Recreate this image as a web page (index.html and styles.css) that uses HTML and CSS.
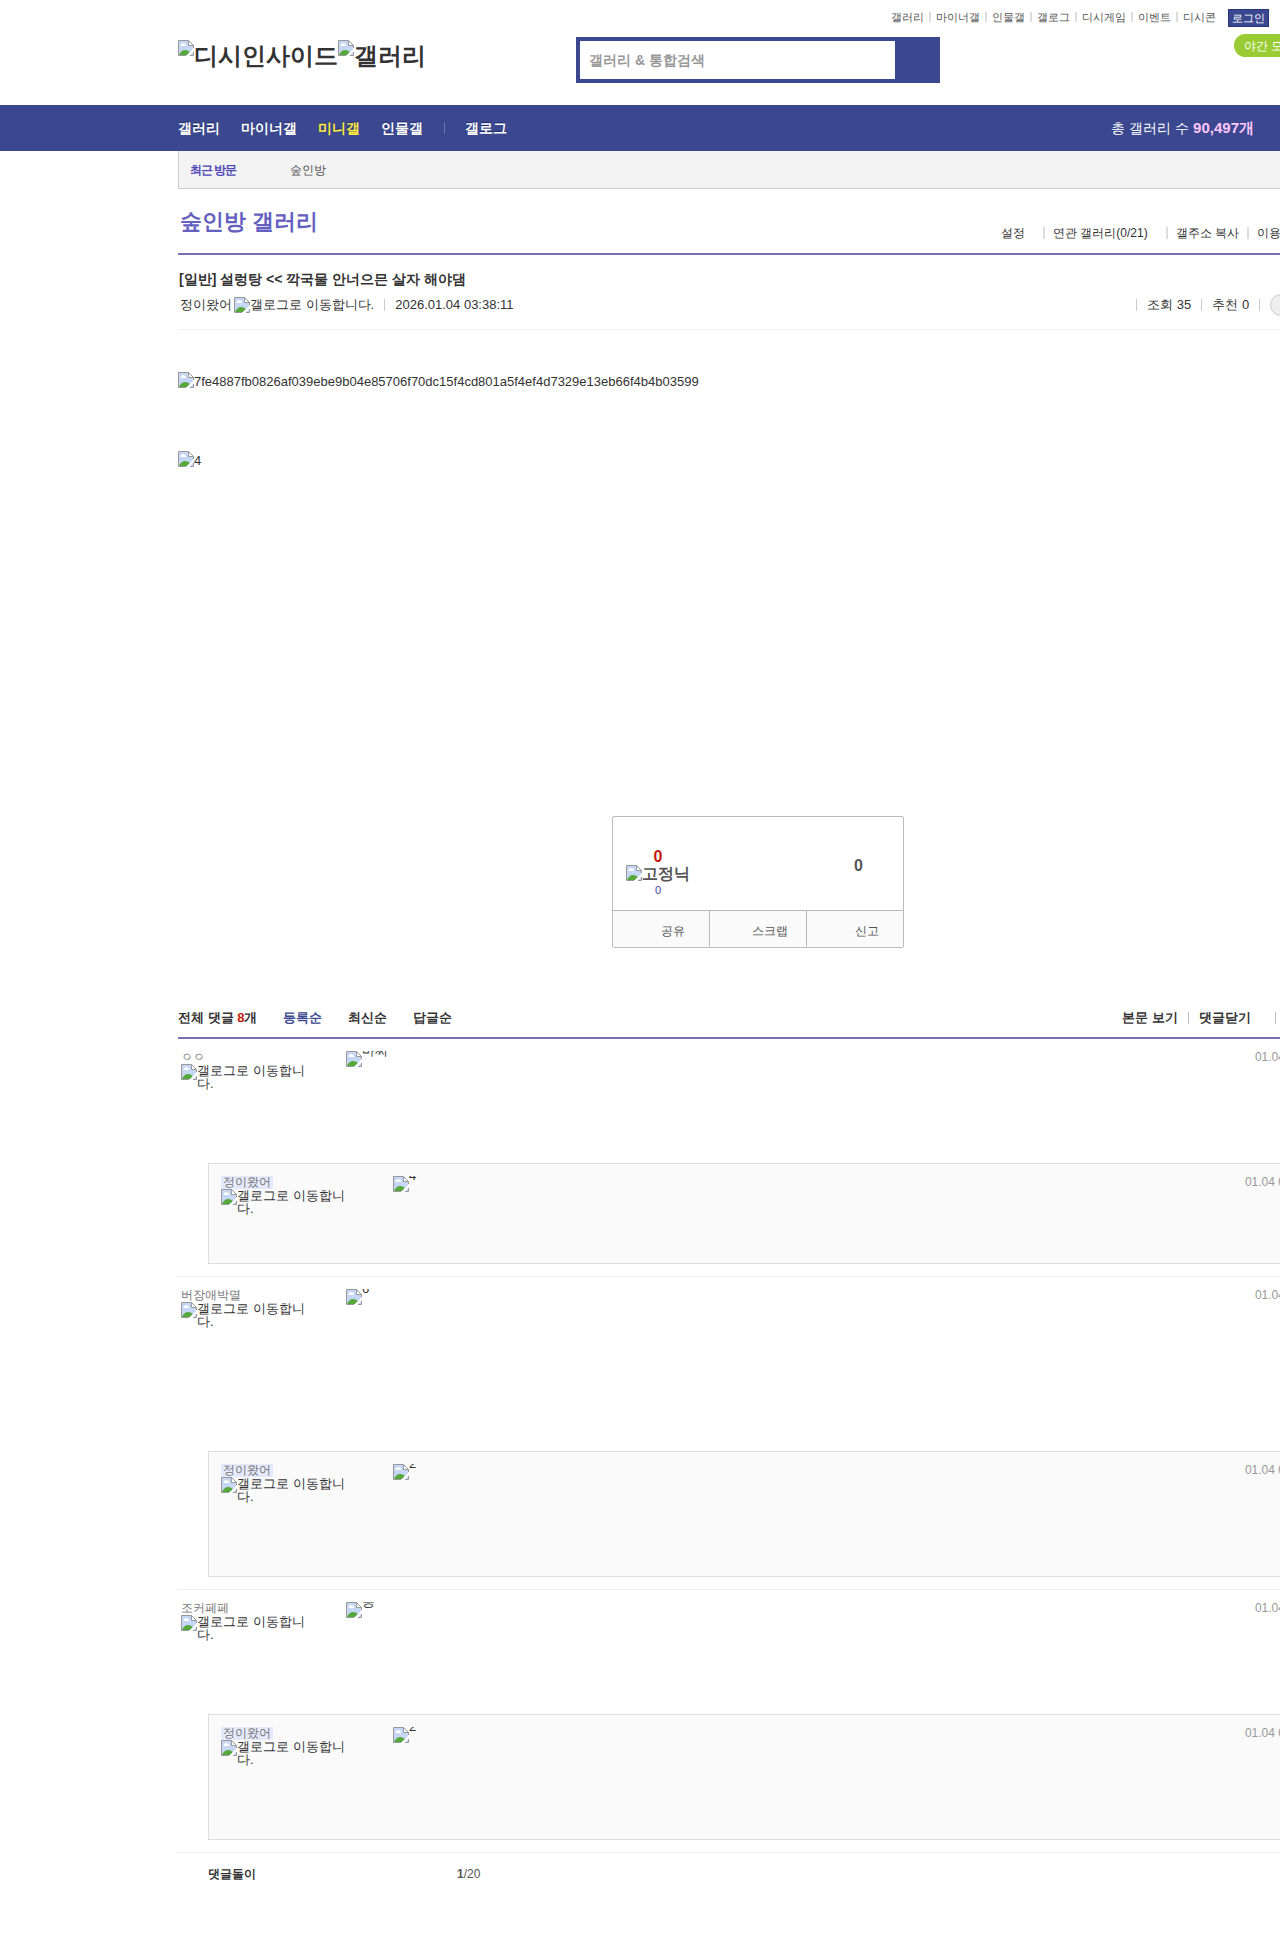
FILE: index.html
```html
<!DOCTYPE html>
<html lang="ko">
<head>
    <meta charset="UTF-8">
    <meta name="viewport" content="width=device-width, initial-scale=1.0">
    <title>숲인방 갤러리</title>
    <link rel="stylesheet" href="styles.css">
</head>
<body>
    <svg class="defs" width="0" height="0" aria-hidden="true">
        <symbol id="noimg" viewBox="0 0 16 16">
            <path d="M.5.5h10l5 5v10H.5z" fill="#c6d7f6"/>
            <path d="M2.500 6a1.500 1.500 0 0 1 1-2 2 2 0 0 1 3.500 0A1.500 1.500 0 0 1 8 6z" fill="#fff"/>
            <path d="M1 15c1-3 3.500-5 6-5s4 1.500 5 2l-3 3z" fill="#56a83c"/>
            <path d="M16 8v3l-4.500 5H8z" fill="#fff"/>
            <path d="M10.500.5v5h5" fill="#fff"/>
            <path d="M8 15.500H.5V.5h10l5 5V8M10.500.5v5h5M15.500 12v3.500H12" fill="none" stroke="#999"/>
        </symbol>
    </svg>

    <header class="wrap header">
        <ul class="top-links">
            <li><a href="#">갤러리</a></li>
            <li><a href="#">마이너갤</a></li>
            <li><a href="#">인물갤</a></li>
            <li><a href="#">갤로그</a></li>
            <li><a href="#">디시게임</a></li>
            <li><a href="#">이벤트</a></li>
            <li><a href="#">디시콘</a></li>
        </ul>
        <a href="#" class="login">로그인</a>
        <button class="night">야간 모드</button>
        <h1 class="logo">
            <a href="#"><svg class="noimg"><use href="#noimg"/></svg>디시인사이드</a><a href="#"><svg class="noimg"><use href="#noimg"/></svg>갤러리</a>
        </h1>
        <form class="search">
            <input type="text" placeholder="갤러리 &amp; 통합검색" aria-label="갤러리 &amp; 통합검색">
            <button type="button" aria-label="검색"></button>
        </form>
    </header>

    <nav class="gnb">
        <div class="wrap gnb-inner">
            <a href="#">갤러리</a>
            <a href="#">마이너갤</a>
            <a href="#" class="on">미니갤</a>
            <a href="#">인물갤</a>
            <a href="#" class="gallog">갤로그</a>
            <p class="total">총 갤러리 수 <strong>90,497개</strong></p>
        </div>
    </nav>

    <main class="wrap">
        <div class="history">
            <h2>최근 방문</h2>
            <a href="#">숲인방</a>
        </div>

        <div class="gall-head">
            <h2><a href="#">숲인방 갤러리</a></h2>
            <div class="gall-menu">
                <button class="wide">설정</button>
                <button class="wide">연관 갤러리(0/21)</button>
                <button>갤주소 복사</button>
                <button>이용안내</button>
            </div>
        </div>

        <article>
            <div class="post-head">
                <h3>[일반] 설렁탕 &lt;&lt; 깍국물 안너으믄 살자 해야댐</h3>
                <div class="post-info">
                    <span class="writer">정이왔어</span>
                    <span class="alt"><svg class="noimg"><use href="#noimg"/></svg>갤로그로 이동합니다.</span>
                    <span class="date">2026.01.04 03:38:11</span>
                    <span class="count">조회 35</span>
                    <span class="count">추천 0</span>
                    <span class="count"></span>
                    <a href="#comments" class="pill">댓글 8</a>
                </div>
            </div>
            <div class="post-body">
                <p class="alt"><svg class="noimg"><use href="#noimg"/></svg>7fe4887fb0826af039ebe9b04e85706f70dc15f4cd801a5f4ef4d7329e13eb66f4b4b03599</p>
                <p class="alt"><svg class="noimg"><use href="#noimg"/></svg>4</p>
            </div>
            <div class="vote-box">
                <div class="votes">
                    <div class="up">
                        <strong>0</strong>
                        <span class="alt fixed"><svg class="noimg"><use href="#noimg"/></svg>고정닉</span>
                        <span class="fixed-num">0</span>
                    </div>
                    <strong class="down">0</strong>
                </div>
                <div class="vote-buttons">
                    <button>공유</button>
                    <button>스크랩</button>
                    <button>신고</button>
                </div>
            </div>
        </article>

        <section id="comments">
            <div class="cmt-head">
                <span>전체 댓글 <em>8</em>개</span>
                <button class="on">등록순</button>
                <button>최신순</button>
                <button>답글순</button>
                <div class="cmt-menu">
                    <a href="#">본문 보기</a>
                    <button>댓글닫기</button>
                    <button>새로고침</button>
                </div>
            </div>

            <ul class="cmt-list">
                <li>
                    <div class="cmt">
                        <div class="user">
                            <span class="nick">ㅇㅇ</span>
                            <span class="alt"><svg class="noimg"><use href="#noimg"/></svg>갤로그로 이동합니다.</span>
                        </div>
                        <div class="con"><svg class="noimg"><use href="#noimg"/></svg><span>마찌</span></div>
                        <time>01.04 03:39:02</time>
                    </div>
                    <div class="cmt reply small">
                        <div class="user">
                            <span class="nick me">정이왔어</span>
                            <span class="alt"><svg class="noimg"><use href="#noimg"/></svg>갤로그로 이동합니다.</span>
                        </div>
                        <div class="con"><svg class="noimg"><use href="#noimg"/></svg><span>4</span></div>
                        <time>01.04 03:39:21</time>
                    </div>
                </li>
                <li>
                    <div class="cmt tall">
                        <div class="user">
                            <span class="nick">버장애박멸</span>
                            <span class="alt"><svg class="noimg"><use href="#noimg"/></svg>갤로그로 이동합니다.</span>
                        </div>
                        <div class="con"><svg class="noimg"><use href="#noimg"/></svg><span>6</span></div>
                        <time>01.04 03:40:15</time>
                    </div>
                    <div class="cmt reply">
                        <div class="user">
                            <span class="nick me">정이왔어</span>
                            <span class="alt"><svg class="noimg"><use href="#noimg"/></svg>갤로그로 이동합니다.</span>
                        </div>
                        <div class="con"><svg class="noimg"><use href="#noimg"/></svg><span>2</span></div>
                        <time>01.04 03:40:48</time>
                    </div>
                </li>
                <li>
                    <div class="cmt">
                        <div class="user">
                            <span class="nick">조커페페</span>
                            <span class="alt"><svg class="noimg"><use href="#noimg"/></svg>갤로그로 이동합니다.</span>
                        </div>
                        <div class="con"><svg class="noimg"><use href="#noimg"/></svg><span>콩</span></div>
                        <time>01.04 03:42:30</time>
                    </div>
                    <div class="cmt reply">
                        <div class="user">
                            <span class="nick me">정이왔어</span>
                            <span class="alt"><svg class="noimg"><use href="#noimg"/></svg>갤로그로 이동합니다.</span>
                        </div>
                        <div class="con"><svg class="noimg"><use href="#noimg"/></svg><span>2</span></div>
                        <time>01.04 03:43:05</time>
                    </div>
                </li>
            </ul>

            <div class="cmt-boy">
                <strong>댓글돌이</strong>
                <span><b>1</b>/20</span>
            </div>
        </section>
    </main>
</body>
</html>
```
FILE: styles.css
```css
* {
    box-sizing: border-box;
    margin: 0;
    padding: 0;
}
html {
    overflow-x: hidden;
}
body {
    min-width: 1516px;
    background: #fff;
    color: #333;
    font-family: "Liberation Sans", sans-serif;
    font-size: 13px;
    line-height: 16px;
}
a {
    color: inherit;
    text-decoration: none;
}
ul {
    list-style: none;
}
em {
    font-style: normal;
}
button,
input {
    font: inherit;
    color: inherit;
    border: none;
    background: none;
}
button {
    cursor: pointer;
}
.defs {
    position: absolute;
}
.wrap {
    width: 1160px;
    margin: 0 auto;
}

/* broken image icon with its alt text */
.noimg {
    flex: none;
    width: 16px;
    height: 16px;
}
.alt {
    display: flex;
}

/* header */
.header {
    position: relative;
    height: 105px;
    padding-top: 37px;
    display: flex;
}
.top-links {
    position: absolute;
    top: 9px;
    right: 122px;
    display: flex;
    font-size: 11px;
    color: #555;
}
.top-links li {
    display: flex;
    align-items: center;
}
.top-links li + li::before {
    content: "";
    width: 2px;
    height: 10px;
    margin: 0 5px;
    background: #ddd;
}
.login {
    position: absolute;
    top: 9px;
    left: 1050px;
    width: 41px;
    height: 18px;
    border: 1px solid #29367c;
    background: #3b4890;
    color: #fff;
    font-size: 11px;
    text-align: center;
}
.night {
    position: absolute;
    top: 34px;
    left: 1056px;
    height: 23px;
    padding: 0 10px;
    border-radius: 12px;
    background: #9c3;
    color: #fff;
    font-size: 12px;
}
.logo {
    width: 398px;
    padding-top: 3px;
    display: flex;
    font-size: 24px;
    line-height: 32px;
}
.logo a {
    display: flex;
}
.search {
    display: flex;
    width: 364px;
    height: 46px;
    border: 4px solid #3b4890;
    background: #3b4890;
}
.search input {
    width: 315px;
    padding: 0 9px;
    background: #fff;
    font-size: 14px;
    font-weight: bold;
}
.search input::placeholder {
    color: #999;
}
.search button {
    flex: 1;
}

/* blue menu bar */
.gnb {
    background: #3b4890;
    color: #fff;
}
.gnb-inner {
    height: 46px;
    display: flex;
    align-items: center;
    gap: 21px;
    font-size: 14px;
}
.gnb a {
    font-weight: bold;
    text-shadow: 0 -1px #1f2b6b;
}
.gnb .on {
    color: #ffed44;
}
.gnb .gallog {
    display: flex;
    align-items: center;
}
.gallog::before {
    content: "";
    width: 1px;
    height: 12px;
    margin-right: 20px;
    background: #6c76ae;
}
.total {
    margin-left: auto;
    margin-right: 84px;
}
.total strong {
    color: #ffc6f9;
    font-size: 15px;
}

/* recent galleries */
.history {
    height: 38px;
    padding-left: 11px;
    display: flex;
    align-items: center;
    border: 1px solid #ccc;
    border-top: none;
    background: #f3f3f3;
    color: #555;
    font-size: 12px;
}
.history h2 {
    width: 100px;
    color: #4d47b5;
    font-size: 12px;
    letter-spacing: -1px;
}

.gall-head {
    height: 66px;
    padding-left: 2px;
    display: flex;
    justify-content: space-between;
    border-bottom: 2px solid #7671b4;
}
.gall-head h2 {
    padding-top: 17px;
    color: #6460c0;
    font-size: 22px;
    line-height: 32px;
}
.gall-menu {
    width: 337px;
    padding-top: 36px;
    display: flex;
    align-items: flex-start;
    white-space: nowrap;
    font-size: 12px;
    line-height: 16px;
}
.gall-menu button {
    display: flex;
    align-items: center;
}
.gall-menu button + button::before {
    content: "";
    width: 2px;
    height: 12px;
    margin: 0 8px;
    background: #ddd;
}
.gall-menu .wide {
    padding-right: 10px;
}

/* post */
.post-head {
    height: 75px;
    padding: 15px 1px 0;
    border-bottom: 1px solid #eee;
}
.post-head h3 {
    font-size: 14px;
    line-height: 18px;
}
.post-info {
    padding: 6px 0 0 1px;
    display: flex;
    align-items: center;
}
.writer {
    margin-right: 2px;
}
.date,
.count {
    display: flex;
    align-items: center;
}
.date {
    margin-right: auto;
}
.date::before,
.count::before {
    content: "";
    width: 1px;
    height: 12px;
    margin: 0 10px;
    background: #ccc;
}
.pill {
    height: 22px;
    padding: 2px 14px;
    border: 1px solid #ccc;
    border-radius: 11px;
    background: #eee;
}
.post-body {
    min-height: 486px;
    padding-top: 42px;
}
.post-body .alt {
    margin-bottom: 63px;
    line-height: 20px;
    height: 16px;
}

.vote-box {
    width: 292px;
    margin: 0 auto 59px;
    border: 1px solid #bbb;
    border-radius: 2px;
    color: #555;
}
.votes {
    height: 93px;
    padding: 4px 40px 0 13px;
    display: flex;
    justify-content: space-between;
    align-items: center;
    font-size: 16px;
    font-weight: bold;
}
.up {
    padding-top: 16px;
    display: flex;
    flex-direction: column;
    align-items: center;
    line-height: 17px;
}
.up strong {
    color: #c31a0a;
}
.fixed-num {
    color: #3b4890;
    font-size: 11px;
    font-weight: normal;
}
.vote-buttons {
    display: flex;
    border-top: 1px solid #bbb;
    background: #fafafa;
    font-size: 12px;
}
.vote-buttons button {
    flex: 1;
    height: 36px;
    padding: 3px 0 0 24px;
}
.vote-buttons button + button {
    border-left: 1px solid #bbb;
}

/* comments */
.cmt-head {
    height: 32px;
    padding-top: 3px;
    display: flex;
    align-items: flex-start;
    gap: 26px;
    border-bottom: 2px solid #7671b4;
    font-weight: bold;
}
.cmt-head em {
    color: #c31a0a;
}
.cmt-head .on {
    color: #3b4890;
}
.cmt-menu {
    margin-left: auto;
    display: flex;
    white-space: nowrap;
}
.cmt-menu button {
    display: flex;
    align-items: center;
}
.cmt-menu button::before {
    content: "";
    width: 1px;
    height: 12px;
    margin: 0 10px;
    background: #bbb;
}
.cmt-menu button:last-child {
    margin-left: 14px;
}
.cmt-list li {
    padding-bottom: 12px;
    border-bottom: 1px solid #eee;
}
.cmt {
    height: 124px;
    padding: 12px 3px;
    display: flex;
}
.cmt.tall {
    height: 174px;
}
.user {
    width: 165px;
    padding-right: 40px;
    display: flex;
    flex-direction: column;
    align-items: flex-start;
    line-height: 13px;
}
.nick {
    color: #777;
    font-size: 12px;
}
.con {
    display: flex;
    width: 100px;
    overflow: hidden;
}
.con span {
    margin-top: -8px;
    line-height: 16px;
}
.cmt time {
    margin-left: auto;
    color: #999;
    font-size: 12px;
    line-height: 12px;
}
.reply {
    height: 126px;
    margin-left: 30px;
    padding: 12px;
    border: 1px solid #ddd;
    background: #fafafa;
}
.reply.small {
    height: 101px;
}
.reply .user {
    width: 172px;
}
.me {
    padding: 0 2px;
    background: #e5e9fc;
}
.cmt-boy {
    padding: 13px 0 60px 30px;
    display: flex;
    font-size: 12px;
}
.cmt-boy strong {
    width: 249px;
}
.cmt-boy span {
    color: #555;
}
```
